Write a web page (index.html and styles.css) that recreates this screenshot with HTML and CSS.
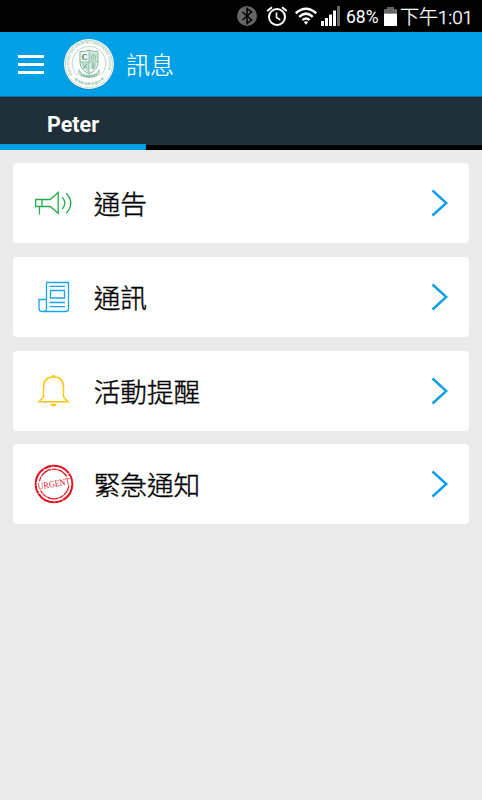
FILE: index.html
```
<!DOCTYPE html>
<html lang="zh-Hant">
  <head>
    <meta charset="UTF-8" />
    <meta name="viewport" content="width=device-width, initial-scale=1.0" />
    <title>訊息</title>
    <link rel="stylesheet" href="styles.css">
  </head>
  <body>
    <div class="status-bar">
      <svg class="bluetooth" width="20" height="20" viewBox="0 0 20 20">
        <circle cx="10" cy="10" r="10" fill="#666" />
        <path d="M5.5 6l9 8-4.500 3.500V2.500L14.500 6l-9 8" fill="none" stroke="#000" stroke-width="1.500" />
      </svg>
      <svg class="alarm" width="22" height="20" viewBox="0 0 22 20">
        <g fill="none" stroke="#fff" stroke-width="2">
          <circle cx="11" cy="11" r="8" />
          <path d="M1.200 5L6 1.200M16 1.200L20.800 5" />
          <path d="M10.500 6.500v5l3.700 2.200" stroke-width="1.600" />
        </g>
      </svg>
      <svg class="wifi" width="22" height="18" viewBox="0 0 22 18">
        <g fill="none" stroke="#fff" stroke-width="2.500">
          <path d="M.8 6.200Q11-2.800 21.200 6.200" />
          <path d="M4.200 9.900Q11 3.400 17.800 9.900" />
          <path d="M7.400 13.200Q11 9.800 14.600 13.200" />
        </g>
        <path d="M8.800 15q2.200-1.600 4.400 0L11 17.800z" fill="#fff" />
      </svg>
      <svg class="signal" width="20" height="20" viewBox="0 0 20 20">
        <path d="M0 15h3v5H0zM4 12h3v8H4zM8 8.500h3V20H8zM12 4.500h3V20h-3z" fill="#fff" />
        <path d="M16 0h3v20h-3z" fill="#666" />
      </svg>
      <span class="percent">68%</span>
      <svg class="battery" width="13" height="19" viewBox="0 0 13 19">
        <path d="M3 0h7v2h3v4.500H0V2h3z" fill="#666" />
        <path d="M0 6.500h13V19H0z" fill="#fff" />
      </svg>
      <span class="clock">下午1:01</span>
    </div>

    <header class="header">
      <div class="menu">
        <span></span>
        <span></span>
        <span></span>
      </div>
      <svg class="logo" width="52" height="52" viewBox="0 0 52 52">
        <defs>
          <path id="arcTop" d="M9.800 37A20 20 0 1 1 42.200 37" />
          <path id="arcBottom" d="M9 39.500A22.500 22.500 0 0 0 43 39.500" />
        </defs>
        <circle cx="26" cy="26.700" r="25.200" fill="#24709a" opacity=".5" />
        <circle cx="26" cy="26" r="25" fill="#fdfefd" />
        <g fill="none" stroke="#8fc1a8">
          <circle cx="26" cy="26" r="23.700" stroke-width=".5" />
          <path d="M14.500 37.500A16.800 16.800 0 1 1 37.500 37.500" stroke-width=".6" />
        </g>
        <text class="logo-ring"><textPath href="#arcTop" textLength="82">HONG KONG TWO COUNTIES SECONDARY SCHOOL</textPath></text>
        <text class="logo-ring logo-ring-zh"><textPath href="#arcBottom" startOffset="3" textLength="33">香港基督教信義中學</textPath></text>
        <path d="M17 13.500q5 .5 9-1.500 4 2 9 1.500v11q0 7-9 11.500-9-4.500-9-11.500z" fill="#f0f8f3" stroke="#7db798" stroke-width="1" />
        <path d="M26 13.500q4 1.500 8 1.200V24h-8zM18 24h8v10.500q-7-3.500-8-10z" fill="#c6e1d3" />
        <path d="M17 24h18M26 12v24" fill="none" stroke="#7db798" stroke-width=".8" />
        <text class="logo-mark" x="18.800" y="22">C</text>
        <path d="M28.500 22v-4l2-1.500 2 1.500v4M30.500 16v6" fill="none" stroke="#7db798" stroke-width=".7" />
        <path d="M28 26h5M28 28h5M28 30h4M30 25v6M20 27l4 3M20 31l4-5" fill="none" stroke="#5fa580" stroke-width=".8" />
        <path d="M16 31.500l1.800 3.500q8.200 5 16.400 0l1.800-3.500 .5 4q-3 3.500-10.500 4-7.500-.5-10.500-4z" fill="#dceee4" stroke="#7db798" stroke-width=".7" />
        <path d="M18 36.500q8 4 16 0" fill="none" stroke="#5da37e" stroke-width="1.300" stroke-dasharray="1 .7" />
      </svg>
      <h1>訊息</h1>
    </header>

    <nav class="tabs">
      <div class="tab active">Peter</div>
    </nav>

    <main class="list">
      <a class="card">
        <svg class="icon" width="40" height="40" viewBox="0 0 40 40">
          <g fill="none" stroke="#22ac4b" stroke-width="1.300">
            <path d="M1.700 16.500h14.500L24.200 9.500v20.800l-8-6.800H1.700zM8 16.500v7M5.500 23.500v8" />
            <path d="M28.300 14.200q5 5.800 0 11.800M32.300 10.200q9 9.800 0 20" />
          </g>
        </svg>
        <span class="label">通告</span>
        <svg class="arrow" width="18" height="28" viewBox="0 0 18 28"><path d="M1.500 1.500L15.300 14 1.500 26.500" /></svg>
      </a>
      <a class="card">
        <svg class="icon" width="40" height="40" viewBox="0 0 40 40">
          <g fill="none" stroke="#1aa3e8" stroke-width="1.300">
            <path d="M12.500 32V5.500h22v26q0 3-3 3H8.500M12.500 22.500h-7.500v9q0 3 3.700 3 3.800 0 3.800-3" />
            <path d="M16.500 13.500h14v7.500h-14z" />
            <path d="M15.500 9.300h15.500M15.500 25.500h15.500M15.500 29.700h15.500" />
          </g>
        </svg>
        <span class="label">通訊</span>
        <svg class="arrow" width="18" height="28" viewBox="0 0 18 28"><path d="M1.500 1.500L15.300 14 1.500 26.500" /></svg>
      </a>
      <a class="card">
        <svg class="icon" width="40" height="40" viewBox="0 0 40 40">
          <path d="M9.500 26V16.500Q9.500 6 19.500 6T29.500 16.500V26L34 30.700H5L9.500 26z" fill="none" stroke="#fdc70f" stroke-width="1.500" />
          <path d="M17.800 6V4.200h3.400V6zM16.200 32.700h6.600q-.8 2.800-3.300 2.800t-3.300-2.800z" fill="#fdc70f" />
        </svg>
        <span class="label">活動提醒</span>
        <svg class="arrow" width="18" height="28" viewBox="0 0 18 28"><path d="M1.500 1.500L15.300 14 1.500 26.500" /></svg>
      </a>
      <a class="card">
        <svg class="icon" width="40" height="40" viewBox="0 0 40 40">
          <g fill="none" stroke="#df141c">
            <circle cx="20" cy="20" r="18.300" stroke-width="2.100" stroke-dasharray="19 .5 8 .4" />
            <circle cx="20" cy="20" r="14.800" stroke-width="1.200" stroke-dasharray="12 .7 5 .5" />
          </g>
          <g transform="rotate(-10 20 20)">
            <path d="M3 15h34v9H3z" fill="#fff" />
            <text class="stamp" x="3.500" y="23" textLength="33" lengthAdjust="spacingAndGlyphs">URGENT</text>
          </g>
        </svg>
        <span class="label">緊急通知</span>
        <svg class="arrow" width="18" height="28" viewBox="0 0 18 28"><path d="M1.500 1.500L15.300 14 1.500 26.500" /></svg>
      </a>
    </main>
  </body>
</html>
```

FILE: styles.css
```
* {
  box-sizing: border-box;
}
body {
  margin: 0;
  min-height: 100vh;
  background-color: #eaeaea;
  font-family: Roboto, "Noto Sans CJK TC", sans-serif;
}
svg {
  display: block;
  flex: none;
  overflow: visible;
}

/* status bar */
.status-bar {
  display: flex;
  align-items: center;
  height: 32px;
  padding-left: 237px;
  background-color: #000;
  color: #fff;
  white-space: nowrap;
}
.alarm {
  margin-left: 9px;
}
.wifi {
  margin-left: 7px;
}
.signal {
  margin-left: 4px;
}
.percent {
  width: 38px;
  margin-left: 5px;
  font-size: 17.5px;
  line-height: 32px;
  padding-top: 2px;
}
.battery {
  margin-left: 0;
}
.clock {
  margin-left: 3px;
  padding-top: 3px;
  font-size: 19px;
  font-weight: 300;
  line-height: 32px;
  letter-spacing: -0.1px;
  -webkit-text-stroke: 0.3px #fff;
}

/* header */
.header {
  display: flex;
  align-items: center;
  height: 65px;
  padding-left: 18px;
  background-color: #00a0e6;
  border-bottom: 1px solid #176a92;
}
.menu {
  display: flex;
  flex-direction: column;
  gap: 5px;
  width: 26px;
  height: 18px;
}
.menu span {
  height: 3px;
  flex: none;
  background-color: #fff;
}
.logo {
  margin-left: 19px;
}
.logo-ring {
  font-family: "Liberation Sans", sans-serif;
  font-size: 3.4px;
  fill: #6fae8e;
}
.logo-ring-zh {
  font-family: "Noto Sans CJK TC", sans-serif;
}
.logo-mark {
  font-family: "Liberation Serif", serif;
  font-size: 8px;
  font-weight: bold;
  fill: #347e59;
}
h1 {
  margin: 0 0 0 11px;
  font-family: "Noto Sans CJK TC", sans-serif;
  font-size: 24px;
  font-weight: 300;
  line-height: 36px;
  color: #fff;
  -webkit-text-stroke: 0.2px #fff;
}

/* tabs */
.tabs {
  display: flex;
  height: 53px;
  background-color: #1f2f3a;
  box-shadow: inset 0 -5px #000;
}
.tab {
  width: 146px;
  text-align: center;
  font-size: 21.5px;
  font-weight: bold;
  line-height: 55px;
  color: #fff;
}
.tab.active {
  border-bottom: 6px solid #00a0e6;
}

/* list */
.list {
  display: flex;
  flex-direction: column;
  gap: 13.67px;
  padding: 13.33px;
}
.card {
  display: flex;
  align-items: center;
  height: 80px;
  padding: 0 20px 0 21px;
  border-radius: 4px;
  background-color: #fff;
}
.label {
  flex: 1;
  margin-left: 19.3px;
  font-family: "Noto Sans CJK TC", sans-serif;
  font-size: 26.67px;
  font-weight: 300;
  line-height: 40px;
  color: #000;
  -webkit-text-stroke: 0.4px #000;
}
.arrow path {
  fill: none;
  stroke: #0a9fe6;
  stroke-width: 2.4;
}
.stamp {
  font-family: "Liberation Serif", serif;
  font-size: 9.5px;
  fill: #df141c;
}
```
